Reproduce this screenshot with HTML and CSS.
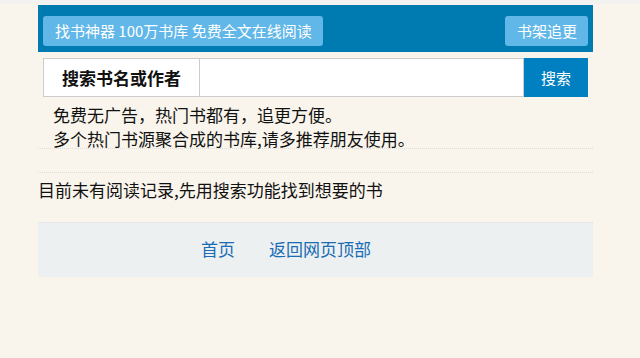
FILE: index.html
```html
<!DOCTYPE html>
<html lang="zh-CN">
<head>
  <meta charset="UTF-8" />
  <title>找书神器</title>
  <link rel="stylesheet" href="styles.css">
</head>
<body>
  <div class="topline"></div>
  <div class="wrap">
    <div class="header">
      <a class="hbtn" href="#">找书神器 100万书库 免费全文在线阅读</a>
      <a class="hbtn" href="#">书架追更</a>
    </div>

    <form class="search" onsubmit="return false;">
      <label class="search-label" for="kw">搜索书名或作者</label>
      <input class="search-input" id="kw" type="text" />
      <button class="search-btn" type="submit">搜索</button>
    </form>

    <div class="intro">
      <p>免费无广告，热门书都有，追更方便。</p>
      <p>多个热门书源聚合成的书库,请多推荐朋友使用。</p>
    </div>
    <div class="gap"></div>

    <p class="history">目前未有阅读记录,先用搜索功能找到想要的书</p>

    <div class="footer">
      <a href="#">首页</a>
      <a href="#">返回网页顶部</a>
    </div>
  </div>
</body>
</html>
```

FILE: styles.css
```css
body {
  margin: 0;
  background-color: #f9f5ec;
  font-family: "Noto Sans CJK SC", "Liberation Sans", sans-serif;
  color: #111;
}

p {
  margin: 0;
}

a {
  text-decoration: none;
}

.topline {
  height: 4px;
  background-color: #f2f2f0;
  margin-bottom: 1px;
}

.wrap {
  width: 555px;
  margin-left: 38px;
}

.header {
  background-color: #007bb2;
  padding: 11px 5px 6px 5px;
  display: flex;
  justify-content: space-between;
}

.hbtn {
  display: block;
  height: 30px;
  line-height: 30px;
  padding: 0 11px 0 12px;
  background-color: #62b7e9;
  color: #fff;
  font-size: 15px;
  border-radius: 3px;
}

.search {
  display: flex;
  margin: 6px 5px 0 5px;
  height: 39px;
}

.search-label {
  box-sizing: border-box;
  width: 157px;
  border: 1px solid #ccc;
  background-color: #fff;
  font-weight: bold;
  font-size: 17px;
  display: flex;
  justify-content: center;
  align-items: center;
}

.search-input {
  box-sizing: border-box;
  flex: 1;
  height: 39px;
  border: 1px solid #ccc;
  border-left: none;
  background-color: #fff;
  outline: none;
  margin: 0;
}

.search-btn {
  width: 64px;
  border: none;
  margin: 0;
  background-color: #0080c1;
  color: #fff;
  font-family: inherit;
  font-size: 15px;
}

.intro {
  height: 45px;
  padding: 6px 0 0 15px;
  font-size: 17px;
  line-height: 24px;
  border-bottom: 1px dotted #ddd;
}

.gap {
  height: 23px;
  border-bottom: 1px dotted #ddd;
}

.history {
  margin-top: 7px;
  font-size: 17px;
  line-height: 20px;
}

.footer {
  margin-top: 22px;
  height: 51px;
  padding: 0 0 3px 163px;
  background-color: #ecf0f1;
  border-top: 1px dotted #ddd;
  display: flex;
  align-items: center;
  gap: 34px;
}

.footer a {
  color: #1a6db5;
  font-size: 17px;
}
```
